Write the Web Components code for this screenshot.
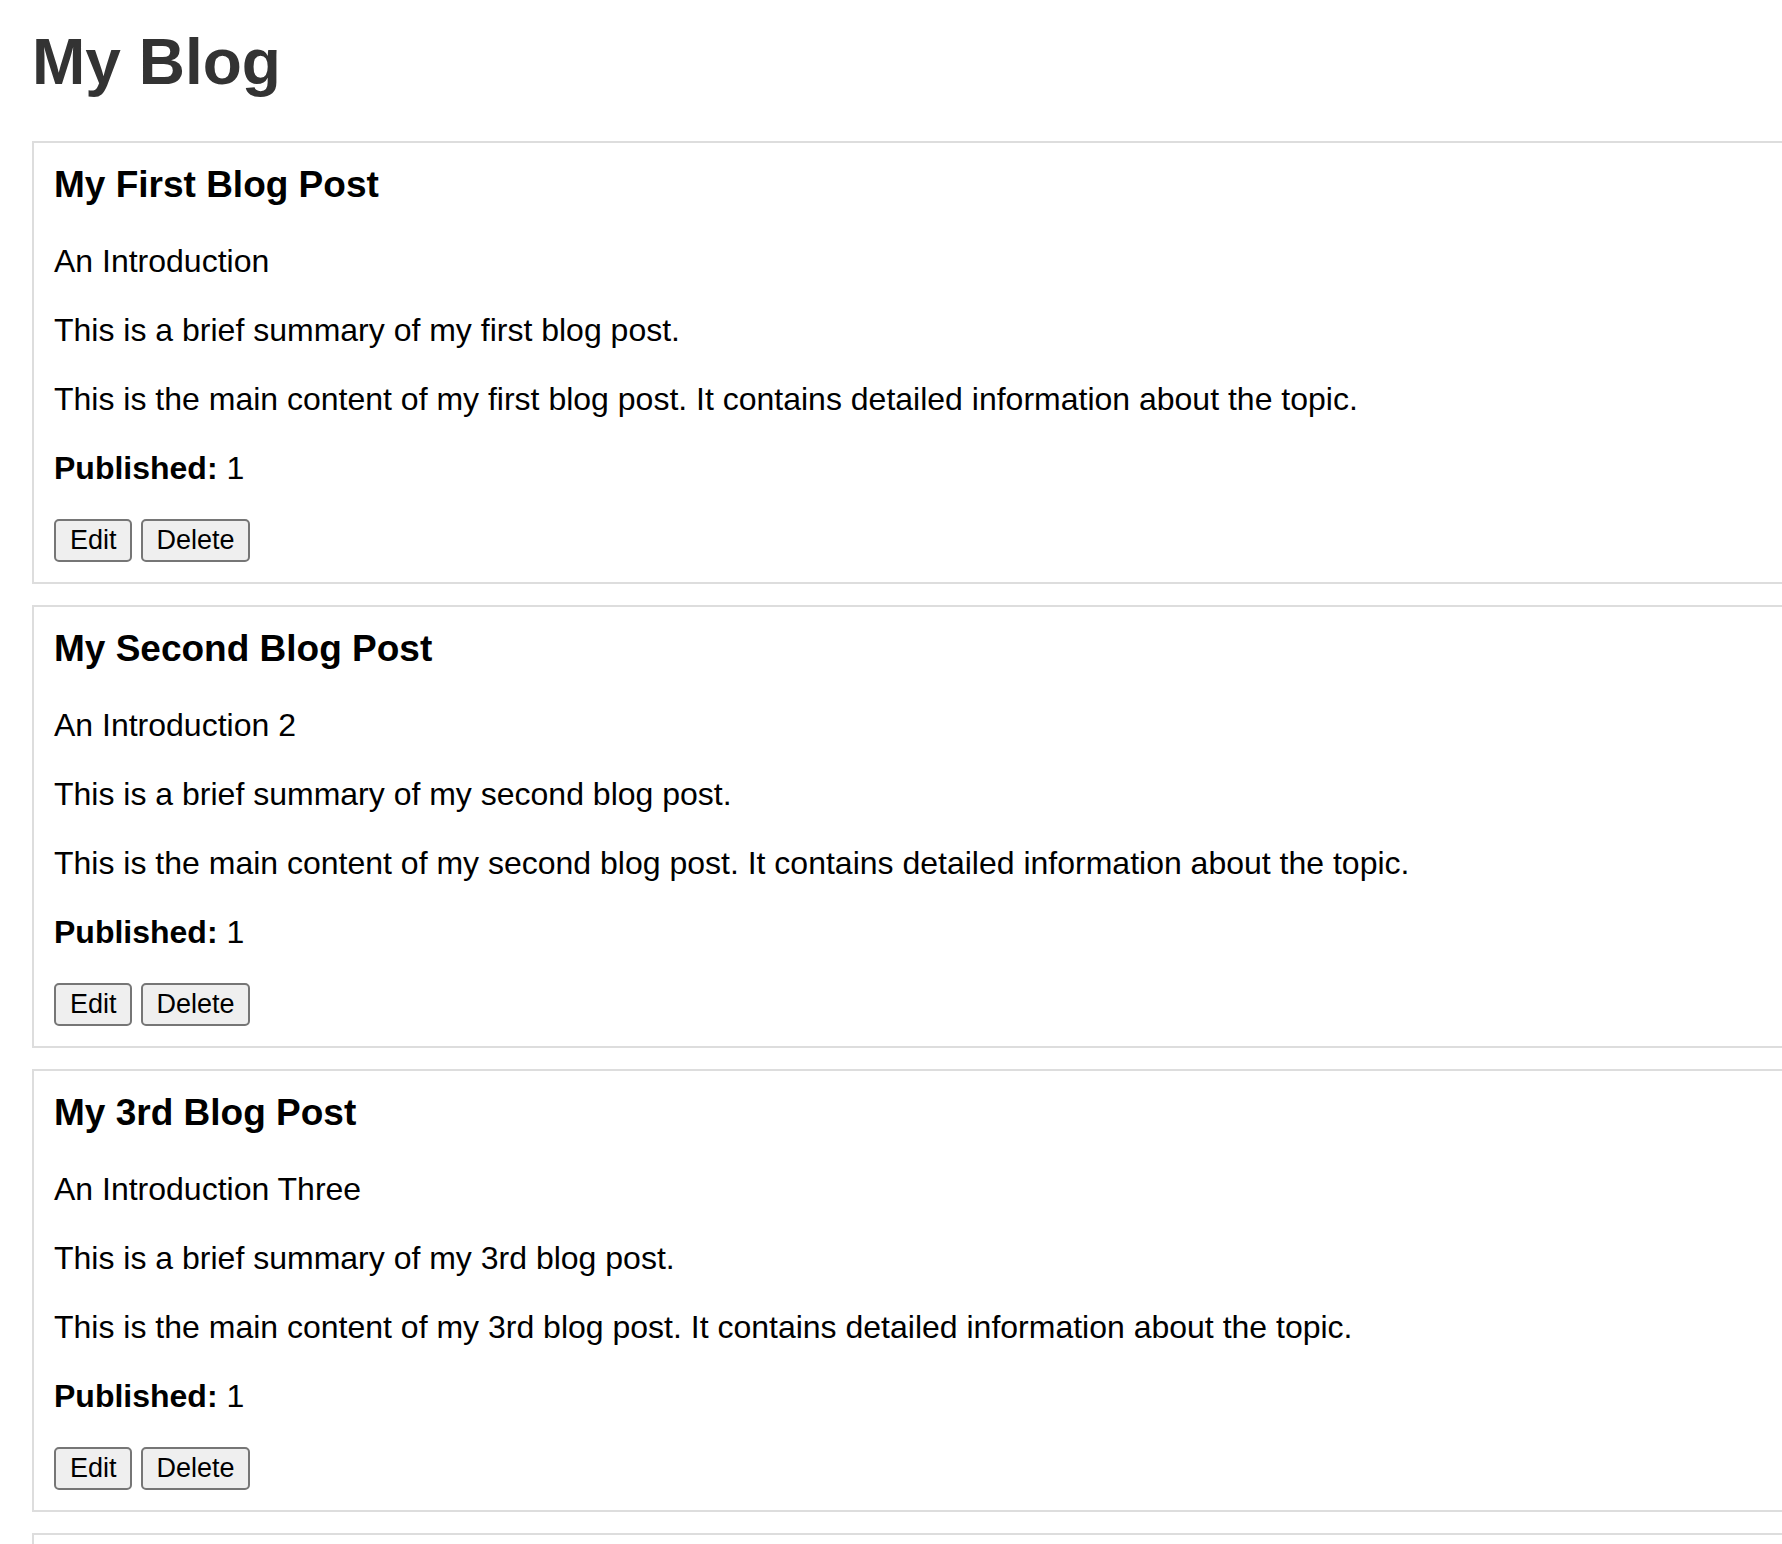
<!DOCTYPE html>
<html lang="en">
<head>
<meta charset="utf-8">
<title>My Blog</title>
<style>
  html { overflow: hidden; }
  body {
    margin: 0;
    background: #fff;
    color: #000;
    font-family: "Liberation Sans", Arial, sans-serif;
    font-size: 32px;
    line-height: 37px;
  }
</style>
</head>
<body>
<template id="blog-page-template">
  <style>
    :host { display: block; padding: 24px 0 0 32px; }
    h1 { margin: 0 0 41px; font-size: 64px; line-height: 76px; color: #333; }
    main { display: flex; flex-direction: column; gap: 21px; }
  </style>
  <h1><slot name="heading"></slot></h1>
  <main><slot></slot></main>
</template>

<template id="blog-post-template">
  <style>
    :host {
      display: block;
      box-sizing: border-box;
      padding: 20px;
      border: 2px solid #ddd;
      border-right: 0;
    }
    article { display: flex; flex-direction: column; gap: 32px; }
    h3 { margin: 0 0 5px; font-size: 37px; line-height: 43px; }
    p { margin: 0; }
    .actions { display: flex; gap: 9px; }
  </style>
  <article>
    <h3><slot name="title"></slot></h3>
    <p><slot name="subtitle"></slot></p>
    <p><slot name="summary"></slot></p>
    <p><slot name="content"></slot></p>
    <p><strong>Published:</strong> <slot name="published"></slot></p>
    <div class="actions">
      <post-button>Edit</post-button>
      <post-button>Delete</post-button>
    </div>
  </article>
</template>

<template id="post-button-template">
  <style>
    :host { display: block; }
    button {
      display: block;
      box-sizing: border-box;
      margin: 0;
      padding: 4px 13px 4px 14px;
      border: 2px solid #767676;
      border-radius: 5px;
      background: #efefef;
      color: #000;
      font-family: inherit;
      font-size: 27px;
      line-height: 31px;
    }
    button:hover { background: #e5e5e5; }
  </style>
  <button type="button"><slot></slot></button>
</template>

<blog-page>
  <span slot="heading">My Blog</span>
  <blog-post>
    <span slot="title">My First Blog Post</span>
    <span slot="subtitle">An Introduction</span>
    <span slot="summary">This is a brief summary of my first blog post.</span>
    <span slot="content">This is the main content of my first blog post. It contains detailed information about the topic.</span>
    <span slot="published">1</span>
  </blog-post>
  <blog-post>
    <span slot="title">My Second Blog Post</span>
    <span slot="subtitle">An Introduction 2</span>
    <span slot="summary">This is a brief summary of my second blog post.</span>
    <span slot="content">This is the main content of my second blog post. It contains detailed information about the topic.</span>
    <span slot="published">1</span>
  </blog-post>
  <blog-post>
    <span slot="title">My 3rd Blog Post</span>
    <span slot="subtitle">An Introduction Three</span>
    <span slot="summary">This is a brief summary of my 3rd blog post.</span>
    <span slot="content">This is the main content of my 3rd blog post. It contains detailed information about the topic.</span>
    <span slot="published">1</span>
  </blog-post>
  <blog-card-edge></blog-card-edge>
</blog-page>

<script>
  const define = (name, templateId) => {
    customElements.define(name, class extends HTMLElement {
      constructor() {
        super();
        const template = document.getElementById(templateId);
        this.attachShadow({ mode: "open" }).append(template.content.cloneNode(true));
      }
    });
  };

  customElements.define("blog-card-edge", class extends HTMLElement {
    constructor() {
      super();
      this.attachShadow({ mode: "open" }).innerHTML = `
        <style>
          :host {
            display: block;
            height: 9px;
            border: 2px solid #ddd;
            border-right: 0;
            border-bottom: 0;
          }
        </style>`;
    }
  });

  define("post-button", "post-button-template");
  define("blog-post", "blog-post-template");
  define("blog-page", "blog-page-template");
</script>
</body>
</html>
